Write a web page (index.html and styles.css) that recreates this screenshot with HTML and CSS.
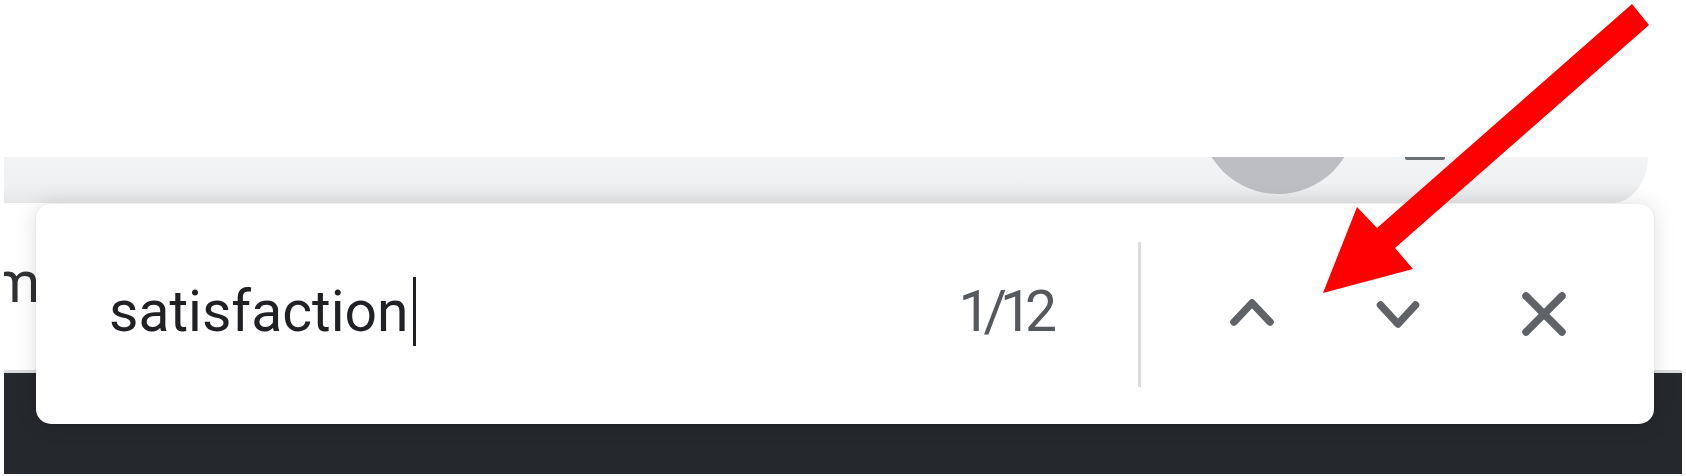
FILE: index.html
```html
<!DOCTYPE html>
<html lang="en">
<head>
<meta charset="utf-8">
<title>Find bar</title>
<link rel="stylesheet" href="styles.css">
</head>
<body>
<div class="page">
  <div class="frame">
    <div class="top"></div>
    <div class="band">
      <div class="avatar"></div>
      <div class="dash"></div>
    </div>
    <div class="middle"><span class="peek">m</span></div>
    <div class="dark"></div>
  </div>

  <div class="findbar">
    <div class="query"><span class="qtext">satisfaction</span><span class="caret"></span></div>
    <div class="count">1/12</div>
    <div class="divider"></div>
    <button class="btn btn-first" aria-label="Previous">
      <svg viewBox="0 0 84 84" width="84" height="84"><polyline points="24,50 42,31 60,50"/></svg>
    </button>
    <button class="btn" aria-label="Next">
      <svg viewBox="0 0 84 84" width="84" height="84"><polyline points="24.5,33 42,52 59.5,33"/></svg>
    </button>
    <button class="btn" aria-label="Close">
      <svg viewBox="0 0 84 84" width="84" height="84"><line x1="24" y1="24" x2="60" y2="60"/><line x1="60" y1="24" x2="24" y2="60"/></svg>
    </button>
  </div>

  <svg class="arrow" viewBox="0 0 1686 476" width="1686" height="476">
    <polygon points="1632,4 1649,25 1395,248 1413,269 1323,293 1357,207 1377,228" fill="#ff0000"/>
  </svg>
</div>
</body>
</html>
```

FILE: styles.css
```css
html, body {
  margin: 0;
  padding: 0;
  background: #ffffff;
}

.page {
  position: relative;
  width: 1686px;
  height: 476px;
  overflow: hidden;
  background: #ffffff;
  font-family: Roboto, "Liberation Sans", sans-serif;
}

.frame {
  margin-left: 4px;
  width: 1678px;
  display: flex;
  flex-direction: column;
}

.top {
  height: 157px;
  background: #ffffff;
}

.band {
  height: 46px;
  width: 1644px;
  background: linear-gradient(#f1f3f4 0%, #f0f1f3 55%, #e6e7e9 100%);
  border-bottom-right-radius: 36px 46px;
  overflow: hidden;
  display: flex;
  align-items: flex-start;
}

.avatar {
  flex-shrink: 0;
  width: 156px;
  height: 156px;
  border-radius: 50%;
  background: #bdbec1;
  margin-left: 1196px;
  margin-top: -119px;
}

.dash {
  flex-shrink: 0;
  width: 40px;
  height: 3px;
  margin-left: 49px;
  background: #6b6e72;
  border-radius: 0 0 2px 2px;
}

.middle {
  height: 167px;
  border-bottom: 3px solid #dadce0;
  overflow: hidden;
  background: #ffffff;
}

.peek {
  display: block;
  margin-left: -14px;
  padding-top: 51px;
  font-size: 57px;
  line-height: 57px;
  color: #303134;
}

.dark {
  height: 101px;
  background: #25282c;
}

.findbar {
  position: absolute;
  left: 36px;
  top: 204px;
  width: 1618px;
  height: 220px;
  box-sizing: border-box;
  background: #ffffff;
  border-radius: 15px;
  box-shadow: 0 0 22px rgba(0, 0, 0, 0.13), 0 1px 3px rgba(0, 0, 0, 0.08);
  display: flex;
  align-items: center;
  padding-left: 73px;
  padding-right: 68px;
}

.query {
  display: flex;
  align-items: center;
  font-size: 57px;
  line-height: 69px;
  color: #202124;
  margin-bottom: 5px;
}

.caret {
  display: block;
  width: 3px;
  height: 69px;
  margin-left: 4px;
  background: #202124;
}

.count {
  margin-left: auto;
  font-size: 57px;
  line-height: 69px;
  letter-spacing: -7px;
  color: #55595e;
  margin-bottom: 5px;
}

.divider {
  width: 3px;
  height: 145px;
  background: #dadce0;
  margin-left: 88px;
  margin-top: 1px;
}

.btn {
  width: 84px;
  height: 84px;
  padding: 0;
  margin: 0 0 0 62px;
  border: 0;
  background: transparent;
  display: flex;
  align-items: center;
  justify-content: center;
}

.btn-first {
  margin-left: 69px;
}

.btn svg {
  display: block;
  fill: none;
  stroke: #5f6368;
  stroke-width: 7.5;
  stroke-linecap: round;
  stroke-linejoin: round;
}

.arrow {
  position: absolute;
  left: 0;
  top: 0;
  pointer-events: none;
}
```
